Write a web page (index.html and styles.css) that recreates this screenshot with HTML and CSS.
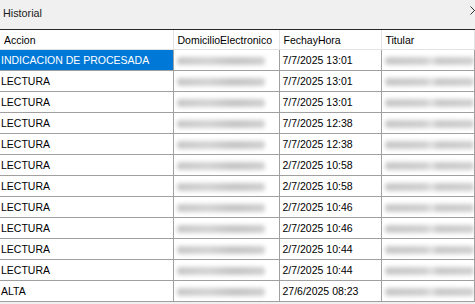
FILE: index.html
```html
<!DOCTYPE HTML>
<html>
<head>
    <meta charset="UTF-8">
    <meta name="viewport" content="width=device-width, initial-scale=1.0">
    <title>Historial</title>
    <link rel="stylesheet" href="styles.css">
</head>
<body>
    <div class="window">
        <div class="titlebar">
            <span class="title">Historial</span>
            <svg class="close" width="9" height="9" viewBox="0 0 9 9">
                <path d="M0.5 0.5 L8.5 8.5 M8.5 0.5 L0.5 8.5" stroke="#333" stroke-width="1" fill="none"/>
            </svg>
        </div>

        <div class="grid">
            <table>
                <colgroup>
                    <col class="col-accion">
                    <col class="col-dom">
                    <col class="col-fecha">
                    <col>
                </colgroup>
                <tr class="head">
                    <th>Accion</th>
                    <th>DomicilioElectronico</th>
                    <th>FechayHora</th>
                    <th>Titular</th>
                </tr>
                <tr>
                    <td class="selected">INDICACION DE PROCESADA</td>
                    <td><div class="blur dom"></div></td>
                    <td>7/7/2025 13:01</td>
                    <td><div class="blur tit"></div></td>
                </tr>
                <tr>
                    <td>LECTURA</td>
                    <td><div class="blur dom"></div></td>
                    <td>7/7/2025 13:01</td>
                    <td><div class="blur tit"></div></td>
                </tr>
                <tr>
                    <td>LECTURA</td>
                    <td><div class="blur dom"></div></td>
                    <td>7/7/2025 13:01</td>
                    <td><div class="blur tit"></div></td>
                </tr>
                <tr>
                    <td>LECTURA</td>
                    <td><div class="blur dom"></div></td>
                    <td>7/7/2025 12:38</td>
                    <td><div class="blur tit"></div></td>
                </tr>
                <tr>
                    <td>LECTURA</td>
                    <td><div class="blur dom"></div></td>
                    <td>7/7/2025 12:38</td>
                    <td><div class="blur tit"></div></td>
                </tr>
                <tr>
                    <td>LECTURA</td>
                    <td><div class="blur dom"></div></td>
                    <td>2/7/2025 10:58</td>
                    <td><div class="blur tit"></div></td>
                </tr>
                <tr>
                    <td>LECTURA</td>
                    <td><div class="blur dom"></div></td>
                    <td>2/7/2025 10:58</td>
                    <td><div class="blur tit"></div></td>
                </tr>
                <tr>
                    <td>LECTURA</td>
                    <td><div class="blur dom"></div></td>
                    <td>2/7/2025 10:46</td>
                    <td><div class="blur tit"></div></td>
                </tr>
                <tr>
                    <td>LECTURA</td>
                    <td><div class="blur dom"></div></td>
                    <td>2/7/2025 10:46</td>
                    <td><div class="blur tit"></div></td>
                </tr>
                <tr>
                    <td>LECTURA</td>
                    <td><div class="blur dom"></div></td>
                    <td>2/7/2025 10:44</td>
                    <td><div class="blur tit"></div></td>
                </tr>
                <tr>
                    <td>LECTURA</td>
                    <td><div class="blur dom"></div></td>
                    <td>2/7/2025 10:44</td>
                    <td><div class="blur tit"></div></td>
                </tr>
                <tr>
                    <td>ALTA</td>
                    <td><div class="blur dom"></div></td>
                    <td>27/6/2025 08:23</td>
                    <td><div class="blur tit"></div></td>
                </tr>
            </table>
        </div>
    </div>
</body>
</html>
```

FILE: styles.css
```css
html, body {
    margin: 0;
    height: 100%;
}

body {
    background-color: #f0f0f0;
    font-family: "Liberation Sans", Arial, sans-serif;
    font-size: 10.5px;
    color: #000;
    overflow: hidden;
}

.titlebar {
    height: 30px;
    display: flex;
    justify-content: space-between;
    align-items: flex-start;
    padding: 7px 0 0 3px;
    box-sizing: border-box;
    border-bottom: 1px solid #262626;
}

.title {
    font-size: 10.8px;
    color: #1a1a1a;
}

.close {
    margin-top: -1px;
    margin-right: -4px;
}

.grid {
    background-color: #fff;
}

table {
    border-collapse: collapse;
    table-layout: fixed;
    width: 100%;
}

.col-accion { width: 173px; }
.col-dom { width: 106px; }
.col-fecha { width: 102px; }

th, td {
    height: 20px;
    padding: 0 0 0 3px;
    text-align: left;
    white-space: nowrap;
    overflow: hidden;
    border: 1px solid #a0a0a0;
    border-top: none;
}

th {
    font-weight: normal;
    height: 19px;
    padding-left: 4px;
    border-left: none;
    border-right: 1px solid #e3e3e3;
    border-bottom: 1px solid #e3e3e3;
}

td:first-child {
    border-left: none;
    padding-left: 1px;
}

.selected {
    background-color: #0078d7;
    color: #fff;
}

.blur {
    height: 8px;
    margin-top: 1px;
    border-radius: 3px;
    background: linear-gradient(90deg, #c8c8c8, #d3d3d3 35%, #c4c4c4 65%, #d0d0d0);
    filter: blur(2px);
}

.dom {
    width: 88px;
}

.tit {
    width: 100%;
    background: linear-gradient(90deg, #c8c8c8, #cfcfcf 45%, #e2e2e2 52%, #c9c9c9 60%, #d0d0d0);
}
```
